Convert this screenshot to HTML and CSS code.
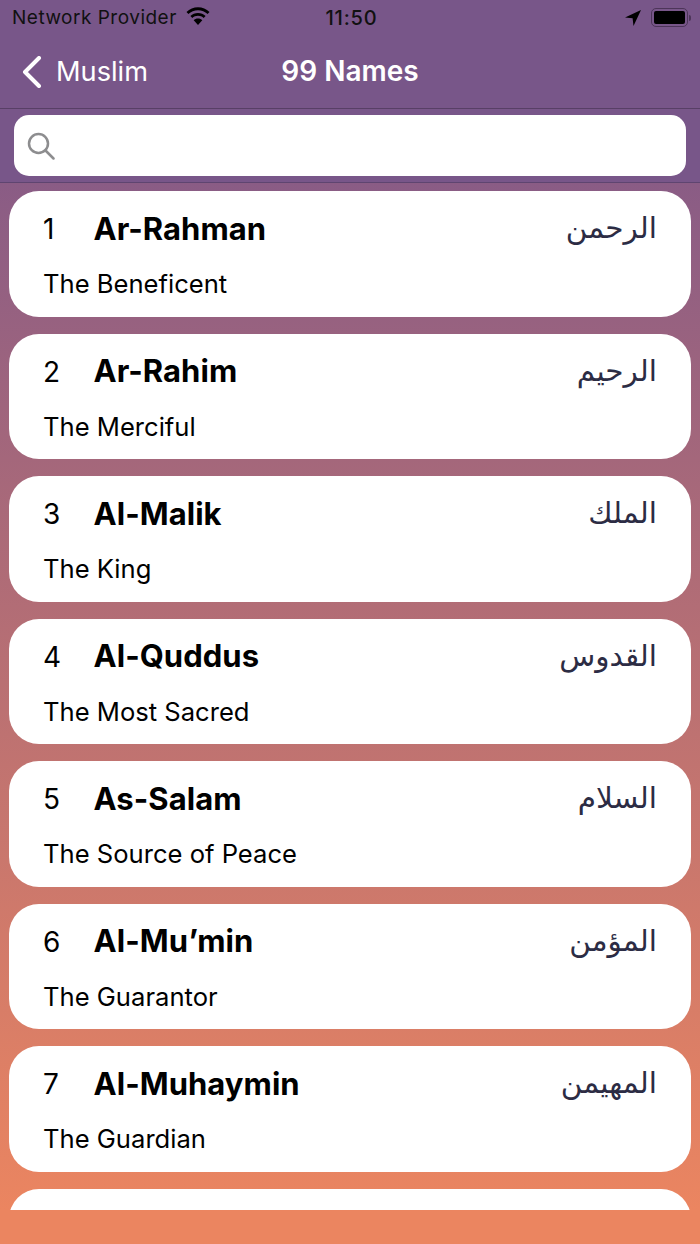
FILE: index.html
```html
<!DOCTYPE html>
<html lang="en">
<head>
<meta charset="utf-8">
<title>99 Names</title>
<link rel="stylesheet" href="styles.css">
</head>
<body>
<div class="screen">
  <header class="top">
    <div class="status">
      <div class="status-left">
        <span class="carrier">Network Provider</span>
        <svg class="wifi" viewBox="0 0 26 20" aria-hidden="true"><path d="M13 3.2c3.7 0 7 1.4 9.600 3.800l1.900-2.100C21.400 2 17.400.2 13 .2S4.600 2 1.500 4.900L3.400 7C6 4.600 9.300 3.200 13 3.200z"/><path d="M13 8.800c2.200 0 4.200.8 5.700 2.200l1.900-2.100C18.600 7 15.900 5.900 13 5.900S7.400 7 5.400 8.900L7.300 11c1.500-1.400 3.500-2.200 5.700-2.200z"/><path d="M13 11.500c-1.700 0-3.200.7-4.300 1.700L13 18l4.300-4.800c-1.100-1-2.600-1.700-4.300-1.700z"/></svg>
      </div>
      <span class="clock">11:50</span>
      <div class="status-right">
        <svg class="arrow" viewBox="0 0 16 16" aria-hidden="true"><path d="M16 0 0 7.500l7.600.8.900 7.700z"/></svg>
        <div class="battery"><div class="battery-fill"></div></div>
        <div class="battery-cap"></div>
      </div>
    </div>
    <nav class="nav">
      <a class="back">
        <svg class="chevron" viewBox="0 0 20 32" aria-hidden="true"><path d="M17 2 3 16l14 14"/></svg>
        <span>Muslim</span>
      </a>
      <h1 class="title">99 Names</h1>
    </nav>
    <div class="search-wrap">
      <div class="search">
        <svg class="glass" viewBox="0 0 28 28" aria-hidden="true"><circle cx="11.500" cy="11.500" r="9.500"/><path d="m18.500 18.500 8 8"/></svg>
      </div>
    </div>
  </header>
  <main class="list">
    <article class="card">
      <div class="row"><span class="num">1</span><span class="name">Ar-Rahman</span><span class="arabic" lang="ar" dir="rtl">الرحمن</span></div>
      <p class="meaning">The Beneficent</p>
    </article>
    <article class="card">
      <div class="row"><span class="num">2</span><span class="name">Ar-Rahim</span><span class="arabic" lang="ar" dir="rtl">الرحيم</span></div>
      <p class="meaning">The Merciful</p>
    </article>
    <article class="card">
      <div class="row"><span class="num">3</span><span class="name">Al-Malik</span><span class="arabic" lang="ar" dir="rtl">الملك</span></div>
      <p class="meaning">The King</p>
    </article>
    <article class="card">
      <div class="row"><span class="num">4</span><span class="name">Al-Quddus</span><span class="arabic" lang="ar" dir="rtl">القدوس</span></div>
      <p class="meaning">The Most Sacred</p>
    </article>
    <article class="card">
      <div class="row"><span class="num">5</span><span class="name">As-Salam</span><span class="arabic" lang="ar" dir="rtl">السلام</span></div>
      <p class="meaning">The Source of Peace</p>
    </article>
    <article class="card">
      <div class="row"><span class="num">6</span><span class="name">Al-Mu’min</span><span class="arabic" lang="ar" dir="rtl">المؤمن</span></div>
      <p class="meaning">The Guarantor</p>
    </article>
    <article class="card">
      <div class="row"><span class="num">7</span><span class="name">Al-Muhaymin</span><span class="arabic" lang="ar" dir="rtl">المهيمن</span></div>
      <p class="meaning">The Guardian</p>
    </article>
    <article class="card"></article>
  </main>
</div>
</body>
</html>
```
FILE: styles.css
```css
* { box-sizing: border-box; }
html, body { margin: 0; padding: 0; }
body { font-family: Inter, "Liberation Sans", sans-serif; }
.screen {
  width: 700px;
  height: 1244px;
  overflow: hidden;
  display: flex;
  flex-direction: column;
  background: #eb8560;
}
.top { background: #785689; flex: none; color: #000; }
.status {
  height: 35px;
  padding: 0 9px 0 12px;
  display: grid;
  grid-template-columns: 1fr auto 1fr;
  align-items: center;
}
.status-left { display: flex; align-items: center; gap: 8px; }
.carrier { font-size: 19px; letter-spacing: 0.5px; color: #111; }
.wifi { width: 26px; height: 20px; margin-top: -2px; fill: #000; }
.clock { font-size: 20px; font-weight: 500; letter-spacing: 0.8px; color: #111; }
.status-right { display: flex; align-items: center; justify-content: flex-end; }
.arrow { width: 16px; height: 16px; fill: #000; margin-right: 10px; }
.battery {
  width: 37px;
  height: 19px;
  border: 1.500px solid #4d3559;
  border-radius: 5px;
  padding: 2px;
}
.battery-fill { width: 100%; height: 100%; background: #000; border-radius: 2px; }
.battery-cap { width: 2px; height: 6px; background: #4d3559; border-radius: 0 2px 2px 0; margin-left: 1px; }
.nav {
  height: 74px;
  position: relative;
  display: flex;
  align-items: center;
  justify-content: center;
  border-bottom: 1px solid #583f66;
  color: #fff;
}
.back {
  position: absolute;
  left: 22px;
  top: 20px;
  display: flex;
  align-items: center;
  gap: 14px;
  font-size: 27.200px;
  color: #fff;
}
.chevron { width: 20px; height: 32px; fill: none; stroke: #fff; stroke-width: 4px; stroke-linecap: round; stroke-linejoin: round; }
.title { margin: -1px 0 0; font-size: 28px; font-weight: 600; color: #fff; }
.search-wrap {
  height: 74px;
  padding: 6px 14px 0;
  border-bottom: 1px solid #5f4570;
}
.search {
  height: 61px;
  background: #fff;
  border-radius: 15px;
  display: flex;
  align-items: center;
  padding-left: 13px;
}
.glass { width: 28px; height: 28px; fill: none; stroke: #8d8d8f; stroke-width: 2.500px; stroke-linecap: round; }
.list {
  flex: none;
  height: 1027px;
  overflow: hidden;
  padding: 8px 9px 0;
  background: linear-gradient(to bottom, #8a5c85 0%, #eb8560 100%);
  display: flex;
  flex-direction: column;
  gap: 17px;
}
.card {
  flex: none;
  height: 125.500px;
  background: #fff;
  border-radius: 30px;
  padding: 17px 34px 0;
}
.row { display: flex; align-items: center; height: 40px; }
.num { width: 50.500px; font-size: 28px; color: #000; margin-top: 2px; }
.name { flex: 1; font-size: 31px; font-weight: 700; letter-spacing: 0.05px; color: #000; }
.arabic { font-family: "DejaVu Sans", sans-serif; font-size: 29.500px; color: #2c2c44; }
.meaning { margin: 20px 0 0; font-size: 25.600px; color: #000; }
```
